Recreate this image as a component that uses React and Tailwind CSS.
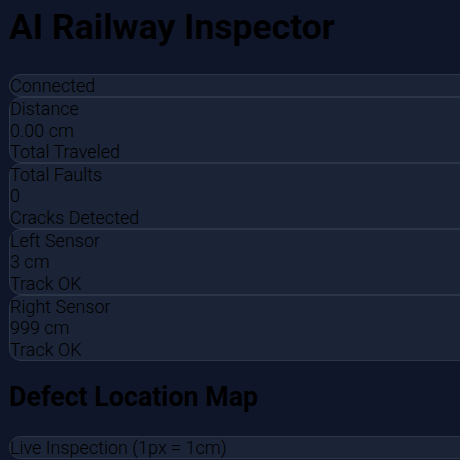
import React from "react";

const stats = [
  { label: "Distance", value: "0.00 cm", note: "Total Traveled" },
  { label: "Total Faults", value: "0", note: "Cracks Detected" },
  { label: "Left Sensor", value: "3 cm", note: "Track OK" },
  { label: "Right Sensor", value: "999 cm", note: "Track OK" },
];

const card =
  "w-[470px] shrink-0 rounded-xl border border-[#2b3548] bg-[#1b2436] leading-[21.3px]";

export default function App() {
  return (
    <div className="h-[460px] overflow-hidden bg-[#10162a] px-[9px] pt-[6px] text-black font-['Roboto',sans-serif] text-[18px] font-light">
      <h1 className="text-[35.5px] font-bold leading-[42px] mb-[26px]">
        AI Railway Inspector
      </h1>

      {/* status + stat cards */}
      <div className="flex flex-col">
        <div className={card}>Connected</div>
        {stats.map((s) => (
          <div key={s.label} className={card}>
            <div>{s.label}</div>
            <div>{s.value}</div>
            <div>{s.note}</div>
          </div>
        ))}
      </div>

      <h2 className="text-[26.8px] font-bold leading-[31px] mt-[21px] mb-[23px]">
        Defect Location Map
      </h2>

      <div className={card}>Live Inspection (1px = 1cm)</div>
    </div>
  );
}
